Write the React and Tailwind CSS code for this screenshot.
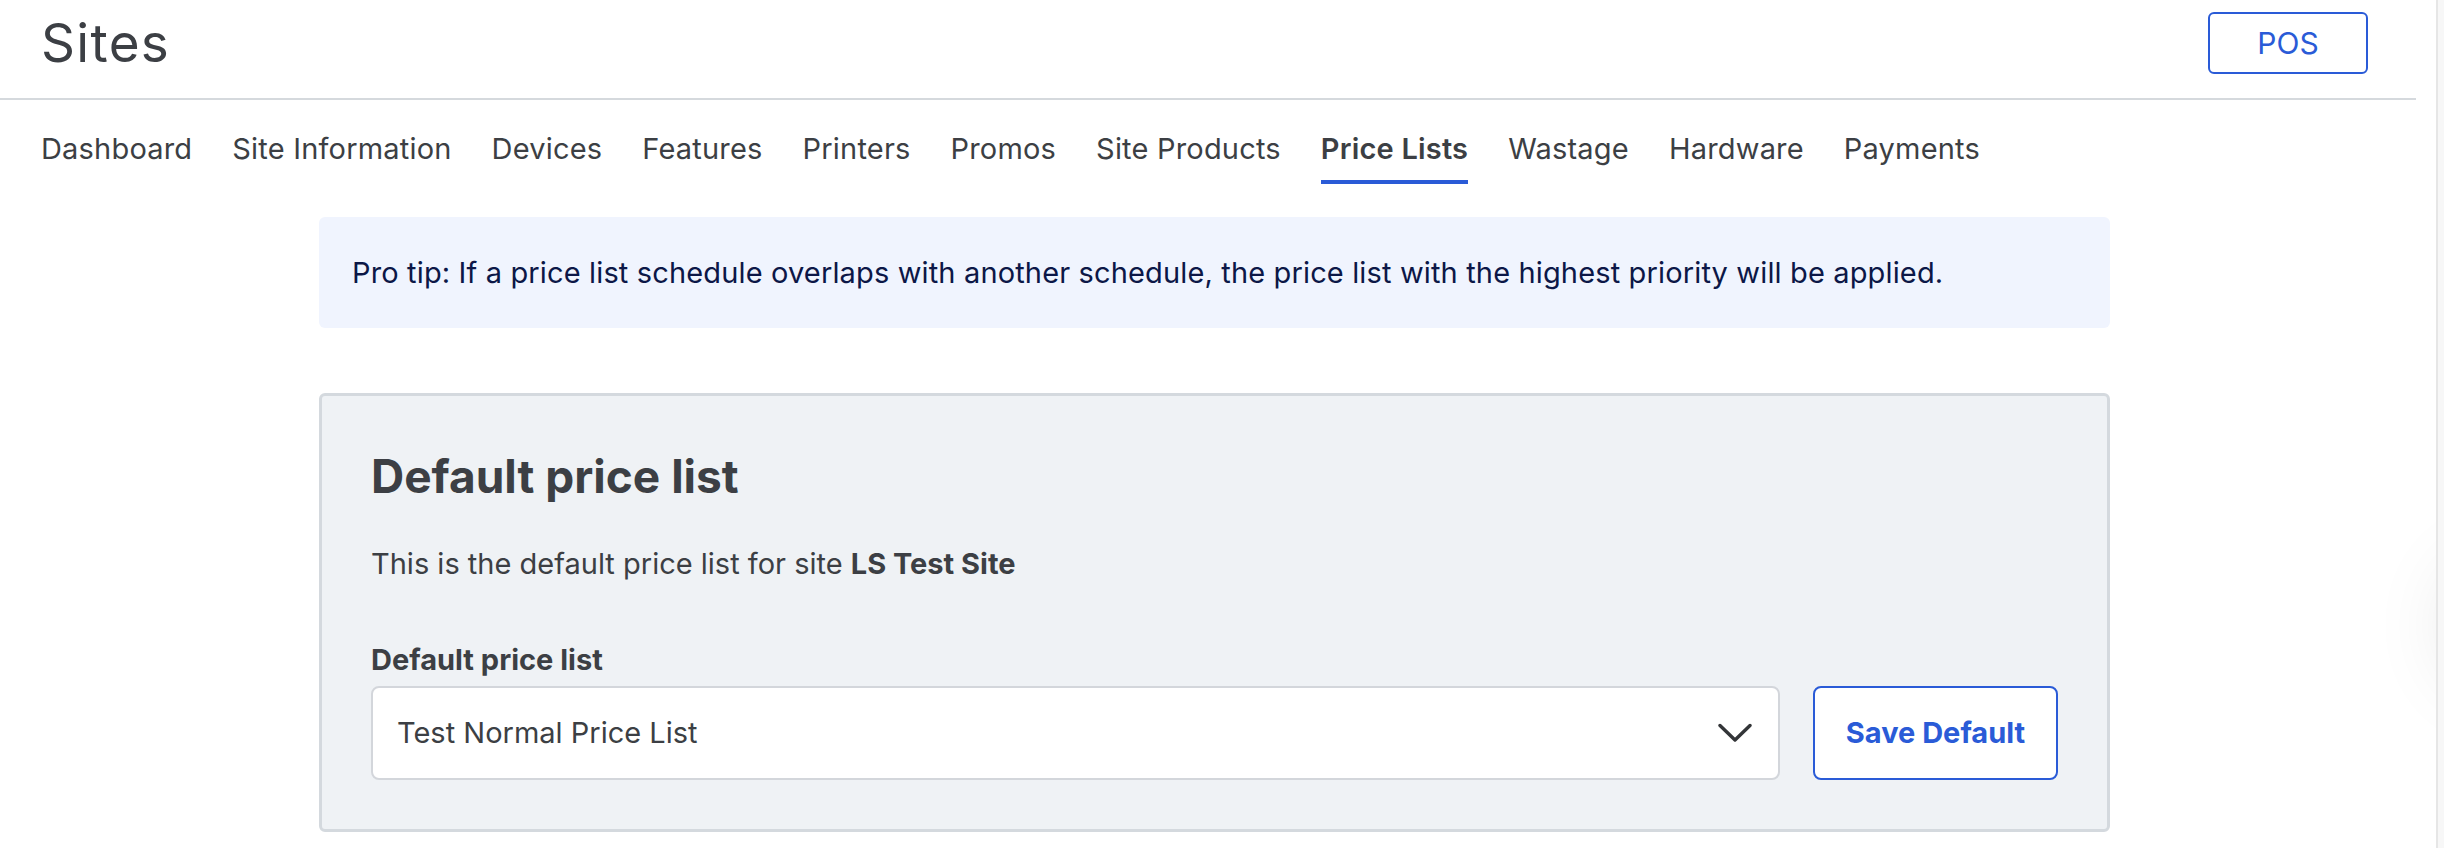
const tabs = [
  "Dashboard",
  "Site Information",
  "Devices",
  "Features",
  "Printers",
  "Promos",
  "Site Products",
  "Price Lists",
  "Wastage",
  "Hardware",
  "Payments",
];

const Chevron = () => (
  <svg width="34" height="20" viewBox="0 0 34 20" fill="none">
    <path
      d="M2 2.5 L17 17 L32 2.5"
      stroke="#333538"
      strokeWidth="3.4"
      strokeLinecap="round"
      strokeLinejoin="round"
    />
  </svg>
);

const App = () => {
  const active = "Price Lists";

  return (
    <div
      className="flex w-full h-[848px] bg-white text-[#3c3f44] overflow-hidden"
      style={{ fontFamily: "Inter, 'Liberation Sans', sans-serif" }}
    >
      <div className="relative flex-1 flex flex-col overflow-hidden">
        {/* Header */}
        <div className="mr-[20px] pl-[41px] pr-[48px] pt-3 pb-[24px] flex items-center justify-between border-b-2 border-[#d5d9dd]">
          <h1 className="text-[53px] leading-[62px] font-normal tracking-[0.025em]">
            Sites
          </h1>
          <button className="w-[160px] h-[62px] rounded-md border-2 border-[#2a5bd7] text-[#2a5bd7] text-[30px]">
            POS
          </button>
        </div>

        {/* Tabs */}
        <ul className="flex gap-[40px] pl-[41px] pt-[31px] tracking-[0.012em]">
          {tabs.map((tab) => (
            <li
              key={tab}
              className={`text-[29px] leading-[36px] pb-[13px] border-b-4 ${
                active === tab
                  ? "border-[#2a5bd7] font-semibold"
                  : "border-transparent"
              }`}
            >
              {tab}
            </li>
          ))}
        </ul>

        {/* Pro tip */}
        <div className="ml-[319px] w-[1791px] mt-[33px] h-[111px] flex items-center px-[33px] rounded-md bg-[#f0f4fe] text-[#0c1747] text-[29px] leading-[36px] tracking-[0.005em]">
          Pro tip: If a price list schedule overlaps with another schedule, the
          price list with the highest priority will be applied.
        </div>

        {/* Default price list card */}
        <div className="ml-[319px] w-[1791px] mt-[65px] rounded-md border-[3px] border-[#d4d9de] bg-[#eff2f5] px-[49px] pt-[52px] pb-[49px]">
          <h2 className="text-[46px] leading-[56px] font-bold">
            Default price list
          </h2>
          <p className="mt-[42px] text-[29px] leading-[36px]">
            This is the default price list for site{" "}
            <span className="font-bold">LS Test Site</span>
          </p>
          <label className="block mt-[60px] text-[29px] leading-[36px] font-bold">
            Default price list
          </label>
          <div className="mt-[8px] flex gap-[33px]">
            <div className="flex-1 h-[94px] flex items-center justify-between pl-[24px] pr-[26px] rounded-lg border-2 border-[#d3d6db] bg-white text-[29px]">
              <span>Test Normal Price List</span>
              <Chevron />
            </div>
            <button className="w-[245px] h-[94px] rounded-lg border-2 border-[#2a5bd7] bg-white text-[#2a5bd7] text-[29px] font-bold">
              Save Default
            </button>
          </div>
        </div>

        {/* Floating widget shadow at the edge */}
        <div className="absolute right-[-140px] top-[560px] w-[130px] h-[130px] rounded-full bg-white shadow-[0_0_80px_rgba(0,0,0,0.10)]" />
      </div>

      {/* Scrollbar strip */}
      <div className="w-[8px] border-l-2 border-[#e6e6e6] bg-[#f7f7f7]" />
    </div>
  );
};

export default App;
